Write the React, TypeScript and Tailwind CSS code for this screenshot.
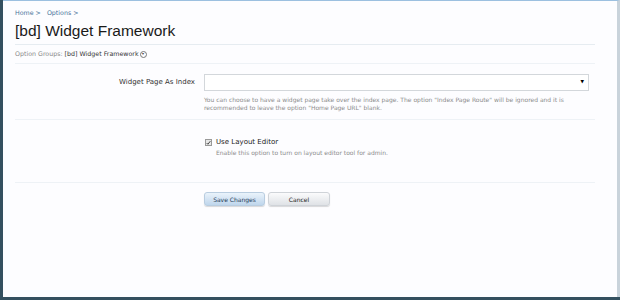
import React from "react";

export default function App() {
  return (
    <div
      className="w-[620px] h-[300px] bg-[#34505f] flex flex-col overflow-hidden"
      style={{ fontFamily: "'DejaVu Sans', Verdana, sans-serif" }}
    >
      <div className="flex-1 ml-[3px] mb-[3px] bg-[#fdfdff] border-t border-[#9cc0e0] border-r-[3px] border-r-[#c9d3db] px-[12px] pt-[7px]">
        <div className="text-[6.3px] leading-[9px] text-[#47739a] flex gap-[6px]">
          <span>Home &gt;</span>
          <span>Options &gt;</span>
        </div>
        <h1
          className="text-[15.5px] leading-[20px] text-[#1a1a1a] mt-[4px] pb-[3px] border-b border-[#e6ecf1] mr-[10px]"
          style={{ fontFamily: "'Liberation Sans', Arial, sans-serif" }}
        >
          [bd] Widget Framework
        </h1>
        <div className="h-[19px] text-[6.3px] text-[#8a8a8a] border-b border-[#eef2f6] mr-[10px] flex items-center">
          Option Groups:&nbsp;<span className="text-[#333]">[bd] Widget Framework</span>
          <span className="ml-[1px] inline-flex items-center justify-center w-[7px] h-[7px] rounded-full border border-[#777] text-[4px] leading-none text-[#444]">
            ▾
          </span>
        </div>

        <div className="flex pt-[10px] pb-[7px] border-b border-[#eef2f6] mr-[10px]">
          <div className="w-[189px] shrink-0 text-right text-[7px] leading-[17px] text-[#333] pr-[9px]">
            Widget Page As Index
          </div>
          <div className="w-[385px]">
            <div className="h-[17px] border border-[#d3d7db] bg-white flex items-center justify-end pr-[4px]">
              <span className="text-[4.5px] text-black">▼</span>
            </div>
            <p className="text-[6px] leading-[8px] text-[#8c8c8c] mt-[5px]">
              You can choose to have a widget page take over the index page. The option "Index Page Route" will be ignored and it is recommended to leave the option "Home Page URL" blank.
            </p>
          </div>
        </div>

        <div className="flex pt-[18px] pb-[25px] border-b border-[#eef2f6] mr-[10px]">
          <div className="w-[190px] shrink-0" />
          <div>
            <div className="flex items-center gap-[4px] h-[9px]">
              <span className="w-[7px] h-[7px] border border-[#999] bg-[#e8e8e8] flex items-center justify-center">
                <svg viewBox="0 0 8 8" width="6" height="6">
                  <path d="M1 4 L3 6 L7 1" stroke="#333" strokeWidth="1.4" fill="none" />
                </svg>
              </span>
              <span className="text-[7px] text-[#222]">Use Layout Editor</span>
            </div>
            <p className="text-[6px] leading-[8px] text-[#8c8c8c] mt-[2px] ml-[11px]">
              Enable this option to turn on layout editor tool for admin.
            </p>
          </div>
        </div>

        <div className="flex pt-[9px] mr-[10px]">
          <div className="w-[189px] shrink-0" />
          <div className="flex gap-[3px]">
            <button className="w-[61px] h-[14px] rounded-[3px] border border-[#b9cde0] bg-gradient-to-b from-[#eaf3fb] to-[#bfd6ec] text-[6px] text-[#1d3a57] shadow-[0_1px_1px_rgba(0,0,0,0.15)]">
              Save Changes
            </button>
            <button className="w-[62px] h-[14px] rounded-[3px] border border-[#cfd3d8] bg-gradient-to-b from-[#fbfbfc] to-[#dfe2e6] text-[6px] text-[#222] shadow-[0_1px_1px_rgba(0,0,0,0.15)]">
              Cancel
            </button>
          </div>
        </div>
      </div>
    </div>
  );
}
